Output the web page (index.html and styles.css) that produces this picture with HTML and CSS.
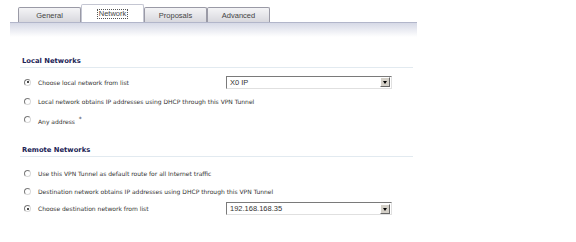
FILE: index.html
```html
<!DOCTYPE html>
<html lang="en">
<head>
    <meta charset="UTF-8">
    <title>VPN Policy - Network</title>
    <link rel="stylesheet" href="styles.css">
</head>
<body>

<div class="panel">
    <!-- Tabs -->
    <div class="tabs">
        <div class="tab">General</div>
        <div class="tab active"><span class="focus">Network</span></div>
        <div class="tab">Proposals</div>
        <div class="tab">Advanced</div>
    </div>
    <div class="tab-band"></div>

    <!-- Local Networks -->
    <div class="section local">
        <div class="section-title">Local Networks</div>
        <div class="option row-a">
            <span class="radio checked"></span>
            <span class="label">Choose local network from list</span>
            <div class="select"><span class="value">X0 IP</span><span class="arrow"></span></div>
        </div>
        <div class="option row-b">
            <span class="radio"></span>
            <span class="label">Local network obtains IP addresses using DHCP through this VPN Tunnel</span>
        </div>
        <div class="option">
            <span class="radio"></span>
            <span class="label">Any address <sup>*</sup></span>
        </div>
    </div>

    <!-- Remote Networks -->
    <div class="section remote">
        <div class="section-title">Remote Networks</div>
        <div class="option row-a">
            <span class="radio"></span>
            <span class="label">Use this VPN Tunnel as default route for all Internet traffic</span>
        </div>
        <div class="option row-b">
            <span class="radio"></span>
            <span class="label">Destination network obtains IP addresses using DHCP through this VPN Tunnel</span>
        </div>
        <div class="option">
            <span class="radio checked"></span>
            <span class="label">Choose destination network from list</span>
            <div class="select"><span class="value">192.168.168.35</span><span class="arrow"></span></div>
        </div>
    </div>
</div>

</body>
</html>
```

FILE: styles.css
```css
/* General Styling */
body {
    margin: 0;
    background: #ffffff;
    font-family: "DejaVu Sans", Verdana, sans-serif;
    color: #222222;
}

.panel {
    width: 417px;
}

/* Tabs */
.tabs {
    display: flex;
    align-items: flex-end;
    height: 22px;
    padding-left: 18px;
}

.tab {
    width: 63px;
    height: 15px;
    box-sizing: border-box;
    border: 1px solid #9a9aa6;
    border-bottom: none;
    border-radius: 2px 2px 0 0;
    background: linear-gradient(#f4f4f6, #d8d8de);
    font-family: "Liberation Sans", Arial, sans-serif;
    font-size: 7.5px;
    color: #444444;
    display: flex;
    align-items: center;
    justify-content: center;
}

.tab.active {
    height: 18px;
    background: #ffffff;
    border-color: #c4c6d2;
}

.tab .focus {
    border: 1px dotted #555555;
    padding: 0 1px;
    line-height: 8px;
}

.tab-band {
    margin-left: 10px;
    height: 14px;
    border-top: 1px solid #b2b6ca;
    background: linear-gradient(#d6d9e6, #ffffff);
}

/* Sections */
.section {
    padding-left: 22px;
}

.section.local {
    margin-top: 20px;
}

.section.remote {
    margin-top: 18px;
}

.section-title {
    font-size: 6.8px;
    font-weight: bold;
    color: #1c2456;
    padding-bottom: 2px;
    border-bottom: 1px solid #e2eaf0;
    width: 391px;
    margin-left: -2px;
    padding-left: 2px;
}

.option {
    display: flex;
    align-items: center;
    height: 17px;
    font-size: 6px;
    color: #333333;
}

.local .row-a {
    margin-top: 4px;
    height: 20px;
}

.local .row-b {
    height: 19px;
}

.remote .row-a {
    margin-top: 6px;
    height: 20px;
}

.remote .row-b {
    height: 17px;
}

.radio {
    width: 7px;
    height: 7px;
    box-sizing: border-box;
    border-radius: 50%;
    border: 1px solid;
    border-color: #7a7a7a #d8d8d8 #d8d8d8 #7a7a7a;
    background: #ffffff;
    margin: 0 7px 0 2px;
    position: relative;
}

.radio.checked::after {
    content: "";
    position: absolute;
    left: 1.5px;
    top: 1.5px;
    width: 2px;
    height: 2px;
    border-radius: 50%;
    background: #111111;
}

.label {
    width: 188px;
    white-space: nowrap;
}

.label sup {
    font-size: 6px;
    margin-left: 2px;
}

/* Select boxes */
.select {
    width: 166px;
    height: 13px;
    box-sizing: border-box;
    border: 1px solid;
    border-color: #7a7a7a #e0e0e0 #e0e0e0 #7a7a7a;
    background: #ffffff;
    display: flex;
    align-items: center;
    font-family: "Liberation Sans", Arial, sans-serif;
    font-size: 7.5px;
    color: #333333;
}

.select .value {
    flex: 1;
    padding-left: 3px;
}

.select .arrow {
    width: 10px;
    height: 10px;
    margin-right: 1px;
    background: #d4d0c8;
    border: 1px solid;
    border-color: #ffffff #666666 #666666 #ffffff;
    box-sizing: border-box;
    position: relative;
}

.select .arrow::after {
    content: "";
    position: absolute;
    left: 2px;
    top: 3px;
    border-left: 2px solid transparent;
    border-right: 2px solid transparent;
    border-top: 3px solid #000000;
}
```
